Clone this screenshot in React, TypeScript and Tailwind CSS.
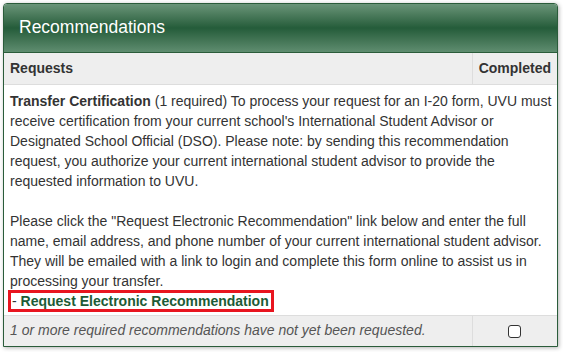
import React from 'react'

const font = { fontFamily: '"Liberation Sans", Arial, sans-serif' }

const App = () => {
  return (
    <div className="w-[563px] h-[352px] bg-white pt-[3px] pl-[3px]" style={font}>
      <div className="w-[555px] border border-[#2a5c3a] rounded-t-[4px] shadow-[1px_1px_4px_rgba(0,0,0,0.3)] bg-white overflow-hidden">
        {/* panel header */}
        <div className="h-[49px] flex items-center pl-[15px] bg-gradient-to-b from-[#6a9579] via-[#245c3a] to-[#5f8d70] border-b border-[#2a5c3a]">
          <h2 className="text-[17.5px] text-white leading-none">Recommendations</h2>
        </div>
        <table className="w-full border-collapse text-[14px] text-[#333]">
          <thead>
            <tr className="bg-[#eeeeee] h-[31px]">
              <th className="text-left font-bold px-[6px] border-b border-[#dddddd]">Requests</th>
              <th className="w-[83px] text-left font-bold px-[6px] border-b border-l border-[#dddddd]">Completed</th>
            </tr>
          </thead>
          <tbody>
            <tr>
              <td colSpan={2} className="pl-[6px] pr-0 pt-[6px] pb-[4px] leading-[20px] align-top">
                <b>Transfer Certification</b> (1 required) To process your request for an I-20 form, UVU must
                receive certification from your current school's International Student Advisor or
                Designated School Official (DSO). Please note: by sending this recommendation
                request, you authorize your current international student advisor to provide the
                requested information to UVU.
                <br />
                <br />
                Please click the "Request Electronic Recommendation" link below and enter the full
                name, email address, and phone number of your current international student advisor.
                They will be emailed with a link to login and complete this form online to assist us in
                processing your transfer.
                <br />
                <span className="-ml-[2px] border-[3px] border-[#e8151f] pl-[1px] pr-[2px]">
                  - <a href="#" className="font-bold text-[#1d5b36]">Request Electronic Recommendation</a>
                </span>
              </td>
            </tr>
            <tr className="bg-[#eeeeee] h-[31px] border-t border-[#dddddd]">
              <td className="px-[6px] italic text-[#555]">1 or more required recommendations have not yet been requested.</td>
              <td className="border-l border-[#dddddd] text-center align-middle">
                <span className="inline-block w-[13px] h-[13px] border border-[#333] rounded-[3px] bg-white align-middle" />
              </td>
            </tr>
          </tbody>
        </table>
      </div>
    </div>
  )
}

export default App
